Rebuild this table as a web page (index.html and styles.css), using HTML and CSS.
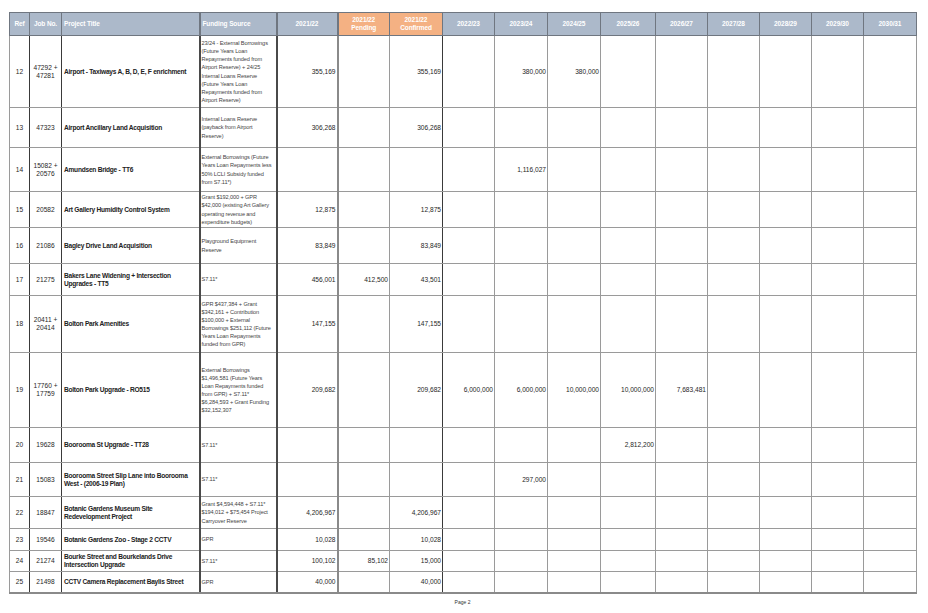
FILE: index.html
```html
<!DOCTYPE html>
<html lang="en">
<head>
<meta charset="utf-8">
<title>Capital Works Program</title>
<link rel="stylesheet" href="styles.css">
</head>
<body>
<div class="page">
<table class="budget">
  <colgroup>
    <col class="c-ref"><col class="c-job"><col class="c-title"><col class="c-fund">
    <col class="c-y1"><col class="c-pend"><col class="c-conf">
    <col class="c-a"><col class="c-b"><col class="c-b"><col class="c-c"><col class="c-a">
    <col class="c-a"><col class="c-a"><col class="c-a"><col class="c-b">
  </colgroup>
  <thead>
    <tr class="hdr">
      <th class="ctr b-r">Ref</th>
      <th class="ctr b-r">Job No.</th>
      <th class="lft b-rk">Project Title</th>
      <th class="lft b-rk">Funding Source</th>
      <th class="b-rg">2021/22</th>
      <th class="orange">2021/22<br>Pending</th>
      <th class="orange b-r">2021/22<br>Confirmed</th>
      <th>2022/23</th>
      <th>2023/24</th>
      <th>2024/25</th>
      <th>2025/26</th>
      <th>2026/27</th>
      <th>2027/28</th>
      <th>2028/29</th>
      <th>2029/30</th>
      <th>2030/31</th>
    </tr>
  </thead>
  <tbody>
    <tr class="h72">
      <td class="ref b-r">12</td><td class="job b-r">47292 +<br>47281</td>
      <td class="title b-rk">Airport - Taxiways A, B, D, E, F enrichment</td>
      <td class="fund b-rk">23/24 - External Borrowings<br>(Future Years Loan<br>Repayments funded from<br>Airport Reserve) + 24/25<br>Internal Loans Reserve<br>(Future Years Loan<br>Repayments funded from<br>Airport Reserve)</td>
      <td class="num b-rg">355,169</td><td class="num"></td><td class="num b-r">355,169</td>
      <td class="num"></td><td class="num">380,000</td><td class="num">380,000</td><td class="num"></td><td class="num"></td><td class="num"></td><td class="num"></td><td class="num"></td><td class="num"></td>
    </tr>
    <tr class="h41">
      <td class="ref b-r">13</td><td class="job b-r">47323</td>
      <td class="title b-rk">Airport Ancillary Land Acquisition</td>
      <td class="fund b-rk">Internal Loans Reserve<br>(payback from Airport<br>Reserve)</td>
      <td class="num b-rg">306,268</td><td class="num"></td><td class="num b-r">306,268</td>
      <td class="num"></td><td class="num"></td><td class="num"></td><td class="num"></td><td class="num"></td><td class="num"></td><td class="num"></td><td class="num"></td><td class="num"></td>
    </tr>
    <tr class="h44">
      <td class="ref b-r">14</td><td class="job b-r">15082 +<br>20576</td>
      <td class="title b-rk">Amundsen Bridge - TT6</td>
      <td class="fund b-rk">External Borrowings (Future<br>Years Loan Repayments less<br>50% LCLI Subsidy funded<br>from S7.11*)</td>
      <td class="num b-rg"></td><td class="num"></td><td class="num b-r"></td>
      <td class="num"></td><td class="num">1,116,027</td><td class="num"></td><td class="num"></td><td class="num"></td><td class="num"></td><td class="num"></td><td class="num"></td><td class="num"></td>
    </tr>
    <tr class="h36">
      <td class="ref b-r">15</td><td class="job b-r">20582</td>
      <td class="title b-rk">Art Gallery Humidity Control System</td>
      <td class="fund b-rk">Grant $192,000 + GPR<br>$42,000 (existing Art Gallery<br>operating revenue and<br>expenditure budgets)</td>
      <td class="num b-rg">12,875</td><td class="num"></td><td class="num b-r">12,875</td>
      <td class="num"></td><td class="num"></td><td class="num"></td><td class="num"></td><td class="num"></td><td class="num"></td><td class="num"></td><td class="num"></td><td class="num"></td>
    </tr>
    <tr class="h36">
      <td class="ref b-r">16</td><td class="job b-r">21086</td>
      <td class="title b-rk">Bagley Drive Land Acquisition</td>
      <td class="fund b-rk">Playground Equipment<br>Reserve</td>
      <td class="num b-rg">83,849</td><td class="num"></td><td class="num b-r">83,849</td>
      <td class="num"></td><td class="num"></td><td class="num"></td><td class="num"></td><td class="num"></td><td class="num"></td><td class="num"></td><td class="num"></td><td class="num"></td>
    </tr>
    <tr class="h32">
      <td class="ref b-r">17</td><td class="job b-r">21275</td>
      <td class="title b-rk">Bakers Lane Widening + Intersection<br>Upgrades - TT5</td>
      <td class="fund b-rk">S7.11*</td>
      <td class="num b-rg">456,001</td><td class="num">412,500</td><td class="num b-r">43,501</td>
      <td class="num"></td><td class="num"></td><td class="num"></td><td class="num"></td><td class="num"></td><td class="num"></td><td class="num"></td><td class="num"></td><td class="num"></td>
    </tr>
    <tr class="h57">
      <td class="ref b-r">18</td><td class="job b-r">20411 +<br>20414</td>
      <td class="title b-rk">Bolton Park Amenities</td>
      <td class="fund b-rk">GPR $437,384 + Grant<br>$342,161 + Contribution<br>$100,000 + External<br>Borrowings $251,112 (Future<br>Years Loan Repayments<br>funded from GPR)</td>
      <td class="num b-rg">147,155</td><td class="num"></td><td class="num b-r">147,155</td>
      <td class="num"></td><td class="num"></td><td class="num"></td><td class="num"></td><td class="num"></td><td class="num"></td><td class="num"></td><td class="num"></td><td class="num"></td>
    </tr>
    <tr class="h75">
      <td class="ref b-r">19</td><td class="job b-r">17760 +<br>17759</td>
      <td class="title b-rk">Bolton Park Upgrade - RO515</td>
      <td class="fund b-rk">External Borrowings<br>$1,496,581 (Future Years<br>Loan Repayments funded<br>from GPR) + S7.11*<br>$6,284,593 + Grant Funding<br>$32,152,307</td>
      <td class="num b-rg">209,682</td><td class="num"></td><td class="num b-r">209,682</td>
      <td class="num">6,000,000</td><td class="num">6,000,000</td><td class="num">10,000,000</td><td class="num">10,000,000</td><td class="num">7,683,481</td><td class="num"></td><td class="num"></td><td class="num"></td><td class="num"></td>
    </tr>
    <tr class="h35">
      <td class="ref b-r">20</td><td class="job b-r">19628</td>
      <td class="title b-rk">Boorooma St Upgrade - TT28</td>
      <td class="fund b-rk">S7.11*</td>
      <td class="num b-rg"></td><td class="num"></td><td class="num b-r"></td>
      <td class="num"></td><td class="num"></td><td class="num"></td><td class="num">2,812,200</td><td class="num"></td><td class="num"></td><td class="num"></td><td class="num"></td><td class="num"></td>
    </tr>
    <tr class="h34">
      <td class="ref b-r">21</td><td class="job b-r">15083</td>
      <td class="title b-rk">Boorooma Street Slip Lane into Boorooma<br>West - (2006-19 Plan)</td>
      <td class="fund b-rk">S7.11*</td>
      <td class="num b-rg"></td><td class="num"></td><td class="num b-r"></td>
      <td class="num"></td><td class="num">297,000</td><td class="num"></td><td class="num"></td><td class="num"></td><td class="num"></td><td class="num"></td><td class="num"></td><td class="num"></td>
    </tr>
    <tr class="h32">
      <td class="ref b-r">22</td><td class="job b-r">18847</td>
      <td class="title b-rk">Botanic Gardens Museum Site<br>Redevelopment Project</td>
      <td class="fund b-rk">Grant $4,594,448 + S7.11*<br>$194,012 + $75,454 Project<br>Carryover Reserve</td>
      <td class="num b-rg">4,206,967</td><td class="num"></td><td class="num b-r">4,206,967</td>
      <td class="num"></td><td class="num"></td><td class="num"></td><td class="num"></td><td class="num"></td><td class="num"></td><td class="num"></td><td class="num"></td><td class="num"></td>
    </tr>
    <tr class="h22">
      <td class="ref b-r">23</td><td class="job b-r">19546</td>
      <td class="title b-rk">Botanic Gardens Zoo - Stage 2 CCTV</td>
      <td class="fund b-rk">GPR</td>
      <td class="num b-rg">10,028</td><td class="num"></td><td class="num b-r">10,028</td>
      <td class="num"></td><td class="num"></td><td class="num"></td><td class="num"></td><td class="num"></td><td class="num"></td><td class="num"></td><td class="num"></td><td class="num"></td>
    </tr>
    <tr class="h21">
      <td class="ref b-r">24</td><td class="job b-r">21274</td>
      <td class="title b-rk">Bourke Street and Bourkelands Drive<br>Intersection Upgrade</td>
      <td class="fund b-rk">S7.11*</td>
      <td class="num b-rg">100,102</td><td class="num">85,102</td><td class="num b-r">15,000</td>
      <td class="num"></td><td class="num"></td><td class="num"></td><td class="num"></td><td class="num"></td><td class="num"></td><td class="num"></td><td class="num"></td><td class="num"></td>
    </tr>
    <tr class="h21 last">
      <td class="ref b-r">25</td><td class="job b-r">21498</td>
      <td class="title b-rk">CCTV Camera Replacement Baylis Street</td>
      <td class="fund b-rk">GPR</td>
      <td class="num b-rg">40,000</td><td class="num"></td><td class="num b-r">40,000</td>
      <td class="num"></td><td class="num"></td><td class="num"></td><td class="num"></td><td class="num"></td><td class="num"></td><td class="num"></td><td class="num"></td><td class="num"></td>
    </tr>
  </tbody>
</table>
<div class="footer">Page 2</div>
</div>
</body>
</html>
```

FILE: styles.css
```css
html, body {
  margin: 0;
  padding: 0;
  background: #ffffff;
}
body {
  font-family: "Liberation Sans", Arial, sans-serif;
  color: #1a1a1a;
}
.page {
  padding: 12px 0 0 9px;
  width: 907px;
}
.budget {
  border-collapse: collapse;
  table-layout: fixed;
  width: 907px;
}
.c-ref { width: 20px; }
.c-job { width: 32px; }
.c-title { width: 138px; }
.c-fund { width: 77px; }
.c-y1 { width: 61px; }
.c-pend { width: 52px; }
.c-conf { width: 53px; }
.c-a { width: 52px; }
.c-b { width: 53px; }
.c-c { width: 55px; }

.budget th,
.budget td {
  padding: 0 1px;
  vertical-align: middle;
  overflow: hidden;
  white-space: nowrap;
}
.hdr th {
  height: 22px;
  background: #acb9ca;
  color: #ffffff;
  font-weight: bold;
  font-size: 6.5px;
  line-height: 8px;
  text-align: center;
  border: 1px solid #6f7680;
  letter-spacing: -0.1px;
}
.hdr th.orange {
  background: #f4b183;
}
.hdr th.lft {
  text-align: left;
  padding-left: 2px;
}
.budget td {
  border: 1px solid #9a9a9a;
  font-size: 6.6px;
  line-height: 7.6px;
  color: #262626;
}
.budget td.ref,
.budget td.job {
  text-align: center;
}
.budget td.title {
  font-weight: bold;
  font-size: 6.6px;
  letter-spacing: -0.25px;
  padding-left: 2px;
  line-height: 7.8px;
  color: #222222;
}
.budget td.fund {
  font-size: 5.6px;
  line-height: 8.1px;
  color: #444444;
  letter-spacing: -0.1px;
  padding-left: 1px;
}
.budget td.num {
  text-align: right;
  padding-right: 1px;
}
.budget .b-r { border-right: 1px solid #3a3a3a; }
.budget .b-rk { border-right: 2px solid #4a4a4a; }
.budget .b-rg { border-right: 2px solid #8a8a8a; }
.hdr th.b-r,
.hdr th.b-rk,
.hdr th.b-rg { border-right-color: #6f7680; }

.h72 td { height: 71px; }
.h41 td { height: 39px; }
.h44 td { height: 43px; }
.h36 td { height: 35px; }
.h32 td { height: 31px; }
.h57 td { height: 56px; }
.h75 td { height: 74px; }
.h35 td { height: 34px; }
.h34 td { height: 33px; }
.h22 td { height: 21px; }
.h21 td { height: 20px; }
.last td {
  border-top: 1px solid #444444;
  border-bottom: 2px solid #8a8a8a;
}

.footer {
  width: 907px;
  text-align: center;
  font-size: 5px;
  line-height: 6px;
  color: #333333;
  margin-top: 5px;
}
```
